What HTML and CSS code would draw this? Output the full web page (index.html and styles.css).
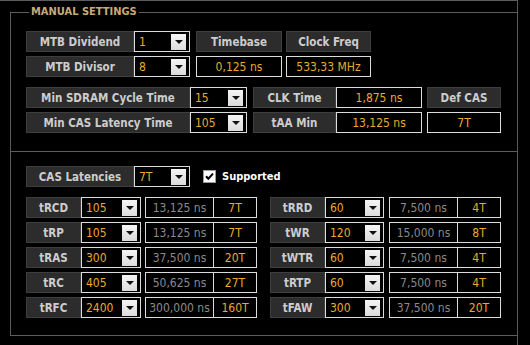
FILE: index.html
```html
<!DOCTYPE html>
<html lang="en">
<head>
    <meta charset="UTF-8">
    <title>Manual Settings</title>
    <link rel="stylesheet" href="styles.css">
</head>
<body>
<div class="frame">
    <div class="group">
        <span class="legend">MANUAL SETTINGS</span>

        <div class="upper">
            <div class="grid mtb">
                <div class="lbl">MTB Dividend</div>
                <div class="sel"><span class="txt">1</span><span class="btn"></span></div>
                <div class="lbl ml6">Timebase</div>
                <div class="lbl ml4">Clock Freq</div>

                <div class="lbl">MTB Divisor</div>
                <div class="sel"><span class="txt">8</span><span class="btn"></span></div>
                <div class="val ml6">0,125 ns</div>
                <div class="val ml4">533,33 MHz</div>
            </div>

            <div class="grid clk">
                <div class="lbl">Min SDRAM Cycle Time</div>
                <div class="sel"><span class="txt">15</span><span class="btn"></span></div>
                <div class="lbl ml6">CLK Time</div>
                <div class="val">1,875 ns</div>
                <div class="lbl ml5">Def CAS</div>

                <div class="lbl">Min CAS Latency Time</div>
                <div class="sel"><span class="txt">105</span><span class="btn"></span></div>
                <div class="lbl ml6">tAA Min</div>
                <div class="val">13,125 ns</div>
                <div class="val ml5">7T</div>
            </div>
        </div>

        <div class="lower">
            <div class="cas-row">
                <div class="lbl cas-lbl">CAS Latencies</div>
                <div class="sel cas-sel"><span class="txt">7T</span><span class="btn"></span></div>
                <span class="check">
                    <svg width="13" height="13" viewBox="0 0 13 13">
                        <rect x="0.5" y="0.5" width="12" height="12" fill="#fff" stroke="#9a9a9a"/>
                        <path d="M3 6.2 L5.3 8.7 L10 3.6" fill="none" stroke="#000" stroke-width="2"/>
                    </svg>
                </span>
                <span class="check-text">Supported</span>
            </div>

            <div class="grid timings">
                <div class="lbl">tRCD</div>
                <div class="sel"><span class="txt">105</span><span class="btn"></span></div>
                <div class="ns ml4">13,125 ns</div>
                <div class="tt">7T</div>
                <div class="lbl ml13">tRRD</div>
                <div class="sel"><span class="txt">60</span><span class="btn"></span></div>
                <div class="ns ml5">7,500 ns</div>
                <div class="tt">4T</div>

                <div class="lbl">tRP</div>
                <div class="sel"><span class="txt">105</span><span class="btn"></span></div>
                <div class="ns ml4">13,125 ns</div>
                <div class="tt">7T</div>
                <div class="lbl ml13">tWR</div>
                <div class="sel"><span class="txt">120</span><span class="btn"></span></div>
                <div class="ns ml5">15,000 ns</div>
                <div class="tt">8T</div>

                <div class="lbl">tRAS</div>
                <div class="sel"><span class="txt">300</span><span class="btn"></span></div>
                <div class="ns ml4">37,500 ns</div>
                <div class="tt">20T</div>
                <div class="lbl ml13">tWTR</div>
                <div class="sel"><span class="txt">60</span><span class="btn"></span></div>
                <div class="ns ml5">7,500 ns</div>
                <div class="tt">4T</div>

                <div class="lbl">tRC</div>
                <div class="sel"><span class="txt">405</span><span class="btn"></span></div>
                <div class="ns ml4">50,625 ns</div>
                <div class="tt">27T</div>
                <div class="lbl ml13">tRTP</div>
                <div class="sel"><span class="txt">60</span><span class="btn"></span></div>
                <div class="ns ml5">7,500 ns</div>
                <div class="tt">4T</div>

                <div class="lbl">tRFC</div>
                <div class="sel"><span class="txt">2400</span><span class="btn"></span></div>
                <div class="ns ml4">300,000 ns</div>
                <div class="tt">160T</div>
                <div class="lbl ml13">tFAW</div>
                <div class="sel"><span class="txt">300</span><span class="btn"></span></div>
                <div class="ns ml5">37,500 ns</div>
                <div class="tt">20T</div>
            </div>
        </div>
    </div>
</div>
</body>
</html>
```

FILE: styles.css
```css
* {
    box-sizing: border-box;
}

body {
    margin: 0;
    background: #000;
    font-family: "DejaVu Sans", Verdana, sans-serif;
    font-stretch: condensed;
    font-size: 11px;
    width: 530px;
    height: 345px;
    overflow: hidden;
}

.frame {
    width: 518px;
    height: 345px;
    border-top: 1px solid #5c5c5c;
    border-right: 1px solid #5c5c5c;
    padding-top: 11px;
}

.group {
    position: relative;
    margin-left: 10px;
    height: 324px;
    border: 1px solid #5c5c5c;
    border-right: none;
}

.legend {
    position: absolute;
    left: 18px;
    top: -8px;
    padding: 0 2px;
    background: #000;
    color: #c8aa76;
    font-weight: bold;
    font-size: 11px;
    line-height: 14px;
}

.upper {
    padding: 18px 0 18px 15px;
    border-bottom: 1px solid #5c5c5c;
}

.lower {
    padding: 14px 0 0 15px;
}

.grid {
    display: grid;
    grid-auto-rows: 21px;
    row-gap: 4px;
}

.mtb {
    grid-template-columns: 108px 56px 92px 89px;
}

.clk {
    margin-top: 10px;
    grid-template-columns: 164px 57px 89px 86px 79px;
}

.timings {
    margin-top: 10px;
    grid-template-columns: 55px 60px 73px 43px 68px 59px 74px 43px;
}

.ml4 { margin-left: 4px; }
.ml5 { margin-left: 5px; }
.ml6 { margin-left: 6px; }
.ml13 { margin-left: 13px; }

.lbl {
    display: flex;
    align-items: center;
    justify-content: center;
    background: #2c2c2c;
    border: 1px solid #3e3e3e;
    color: #cdcdcd;
    font-weight: bold;
    font-size: 11.5px;
    white-space: nowrap;
}

.sel {
    display: flex;
    align-items: center;
    background: #000;
    border: 1px solid #dcdcdc;
    padding: 1px 3px 1px 4px;
    color: #eaaa2c;
    font-size: 12px;
}

.sel .txt {
    flex: 1;
}

.sel .btn {
    width: 15px;
    height: 16px;
    background: linear-gradient(#f4f4f4, #dcdcdc);
    display: flex;
    align-items: center;
    justify-content: center;
}

.sel .btn::after {
    content: "";
    border-left: 4px solid transparent;
    border-right: 4px solid transparent;
    border-top: 4px solid #111;
}

.val {
    display: flex;
    align-items: center;
    justify-content: center;
    border: 1px solid #dcdcdc;
    color: #eaaa2c;
    font-size: 12px;
    white-space: nowrap;
}

.ns {
    display: flex;
    align-items: center;
    justify-content: center;
    border: 1px solid #dcdcdc;
    color: #8a8a8a;
    font-size: 12px;
    white-space: nowrap;
}

.tt {
    display: flex;
    align-items: center;
    justify-content: center;
    border: 1px solid #dcdcdc;
    border-left: none;
    color: #eaaa2c;
    font-size: 12px;
}

.cas-row {
    display: flex;
    align-items: center;
    height: 21px;
}

.cas-lbl {
    width: 108px;
    height: 21px;
}

.cas-sel {
    width: 56px;
    height: 21px;
}

.check {
    margin-left: 13px;
    width: 13px;
    height: 13px;
    display: flex;
}

.check-text {
    margin-left: 6px;
    color: #fff;
    font-weight: bold;
    font-size: 11px;
}
```
